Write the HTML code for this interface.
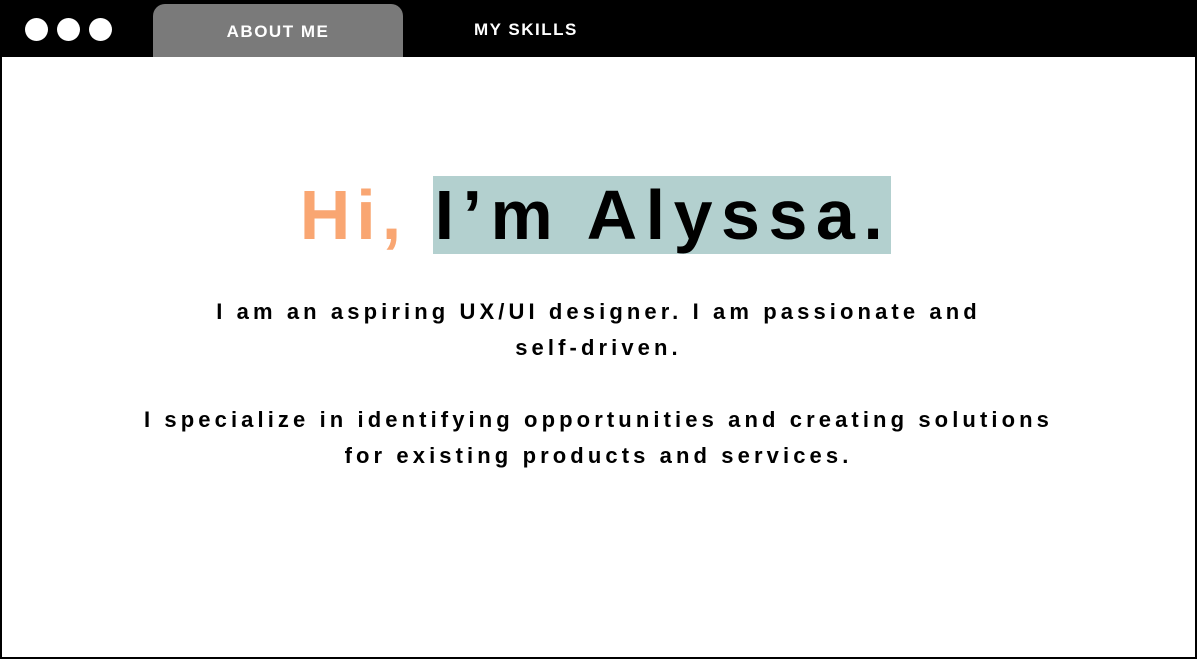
<!DOCTYPE html>
<html><head><meta charset="utf-8"><style>
*{margin:0;padding:0;box-sizing:border-box}
body{width:1197px;height:659px;background:#fff;position:relative;overflow:hidden;font-family:"Liberation Sans",sans-serif}
.frame{position:absolute;left:0;top:0;width:1197px;height:659px;border:2px solid #000}
.bar{position:absolute;left:0;top:0;width:1197px;height:57px;background:#000}
.dot{position:absolute;top:18px;width:23px;height:23px;border-radius:50%;background:#fff}
.tab{position:absolute;left:153px;top:4px;width:250px;height:53px;background:#7a7a7a;border-radius:12px 12px 0 0;color:#fff;font-weight:bold;font-size:17px;letter-spacing:1.5px;text-align:center;line-height:56px}
.sk{position:absolute;left:474px;top:20px;color:#fff;font-weight:bold;font-size:17px;letter-spacing:1.5px}
h1{position:absolute;left:-3px;width:1197px;top:172px;text-align:center;font-size:70px;font-weight:bold;white-space:nowrap;line-height:86px}
.hi{color:#f9a672;letter-spacing:6px}
.hl{background:#b3d0cf;padding:0 0 0 2px;letter-spacing:8.5px}
.p{position:absolute;left:0;width:1197px;text-align:center;font-weight:bold;font-size:22px;letter-spacing:4.1px;line-height:36px;color:#000}
</style></head><body>
<div class="bar"></div>
<div class="dot" style="left:25px"></div>
<div class="dot" style="left:57px"></div>
<div class="dot" style="left:89px"></div>
<div class="tab">ABOUT ME</div>
<div class="sk">MY SKILLS</div>
<div class="frame"></div>
<h1><span class="hi">Hi, </span><span class="hl">I’m Alyssa.</span></h1>
<div class="p" style="top:294px">I am an aspiring UX/UI designer. I am passionate and<br>self-driven.</div>
<div class="p" style="top:402px">I specialize in identifying opportunities and creating solutions<br>for existing products and services.</div>
</body></html>
